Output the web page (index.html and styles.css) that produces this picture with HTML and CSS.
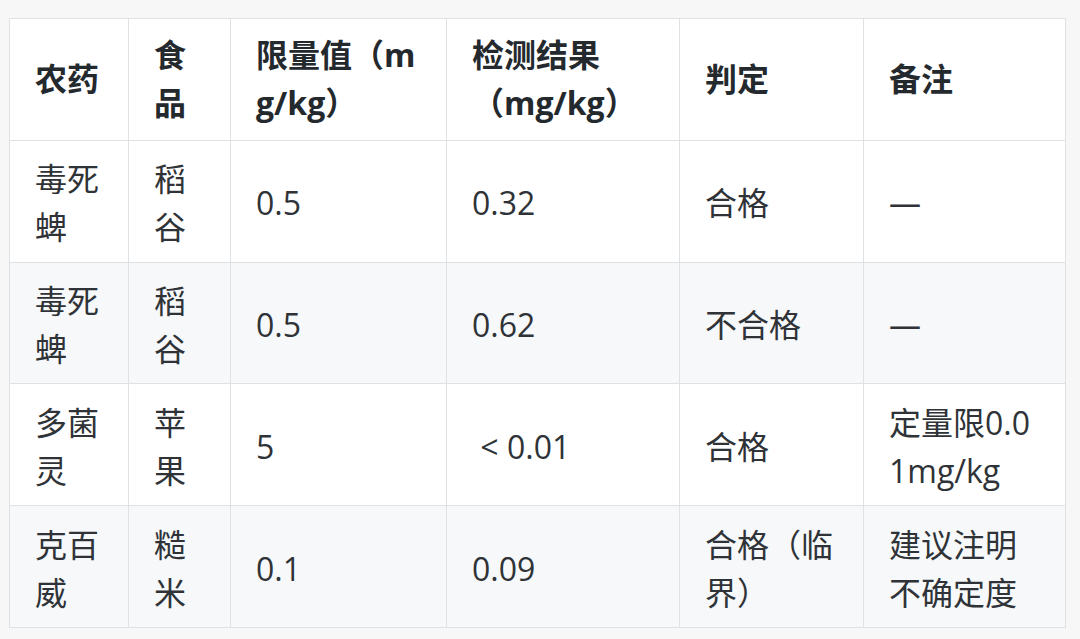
FILE: index.html
```html
<!DOCTYPE html>
<html lang="zh-CN">
<head>
<meta charset="utf-8">
<link rel="stylesheet" href="styles.css">
</head>
<body>
<div class="page">
<table class="tbl">
  <colgroup>
    <col class="c1"><col class="c2"><col class="c3"><col class="c4"><col class="c5"><col class="c6">
  </colgroup>
  <thead>
    <tr><th>农药</th><th>食品</th><th>限量值（mg/kg）</th><th>检测结果（mg/kg）</th><th>判定</th><th>备注</th></tr>
  </thead>
  <tbody>
    <tr><td>毒死蜱</td><td>稻谷</td><td>0.5</td><td>0.32</td><td>合格</td><td>—</td></tr>
    <tr><td>毒死蜱</td><td>稻谷</td><td>0.5</td><td>0.62</td><td>不合格</td><td>—</td></tr>
    <tr><td>多菌灵</td><td>苹果</td><td>5</td><td>&nbsp;&lt; 0.01</td><td>合格</td><td>定量限0.01mg/kg</td></tr>
    <tr><td>克百威</td><td>糙米</td><td>0.1</td><td>0.09</td><td>合格（临界）</td><td>建议注明不确定度</td></tr>
  </tbody>
</table>
</div>
</body>
</html>
```
FILE: styles.css
```css
html, body {
  margin: 0;
  padding: 0;
  background: #f7f7f7;
}
.page {
  padding: 18px 0 0 9px;
}
.tbl {
  border-collapse: collapse;
  table-layout: fixed;
  width: 1056px;
  font-family: "Open Sans", "Noto Sans CJK SC", sans-serif;
  font-size: 32px;
  line-height: 48px;
  color: #2f3337;
  background: #fff;
}
.c1 { width: 119px; }
.c2 { width: 102px; }
.c3 { width: 216px; }
.c4 { width: 233px; }
.c5 { width: 184px; }
.c6 { width: 202px; }
.tbl th, .tbl td {
  border: 1px solid #dfe2e5;
  padding: 12.4px 25px;
  text-align: left;
  vertical-align: middle;
  word-break: break-all;
}
.tbl td {
  padding-top: 14.4px;
  padding-bottom: 10.4px;
}
.tbl th {
  font-weight: 700;
  color: #24292e;
}
.tbl tbody tr:nth-child(even) {
  background: #f6f8fa;
}
```
